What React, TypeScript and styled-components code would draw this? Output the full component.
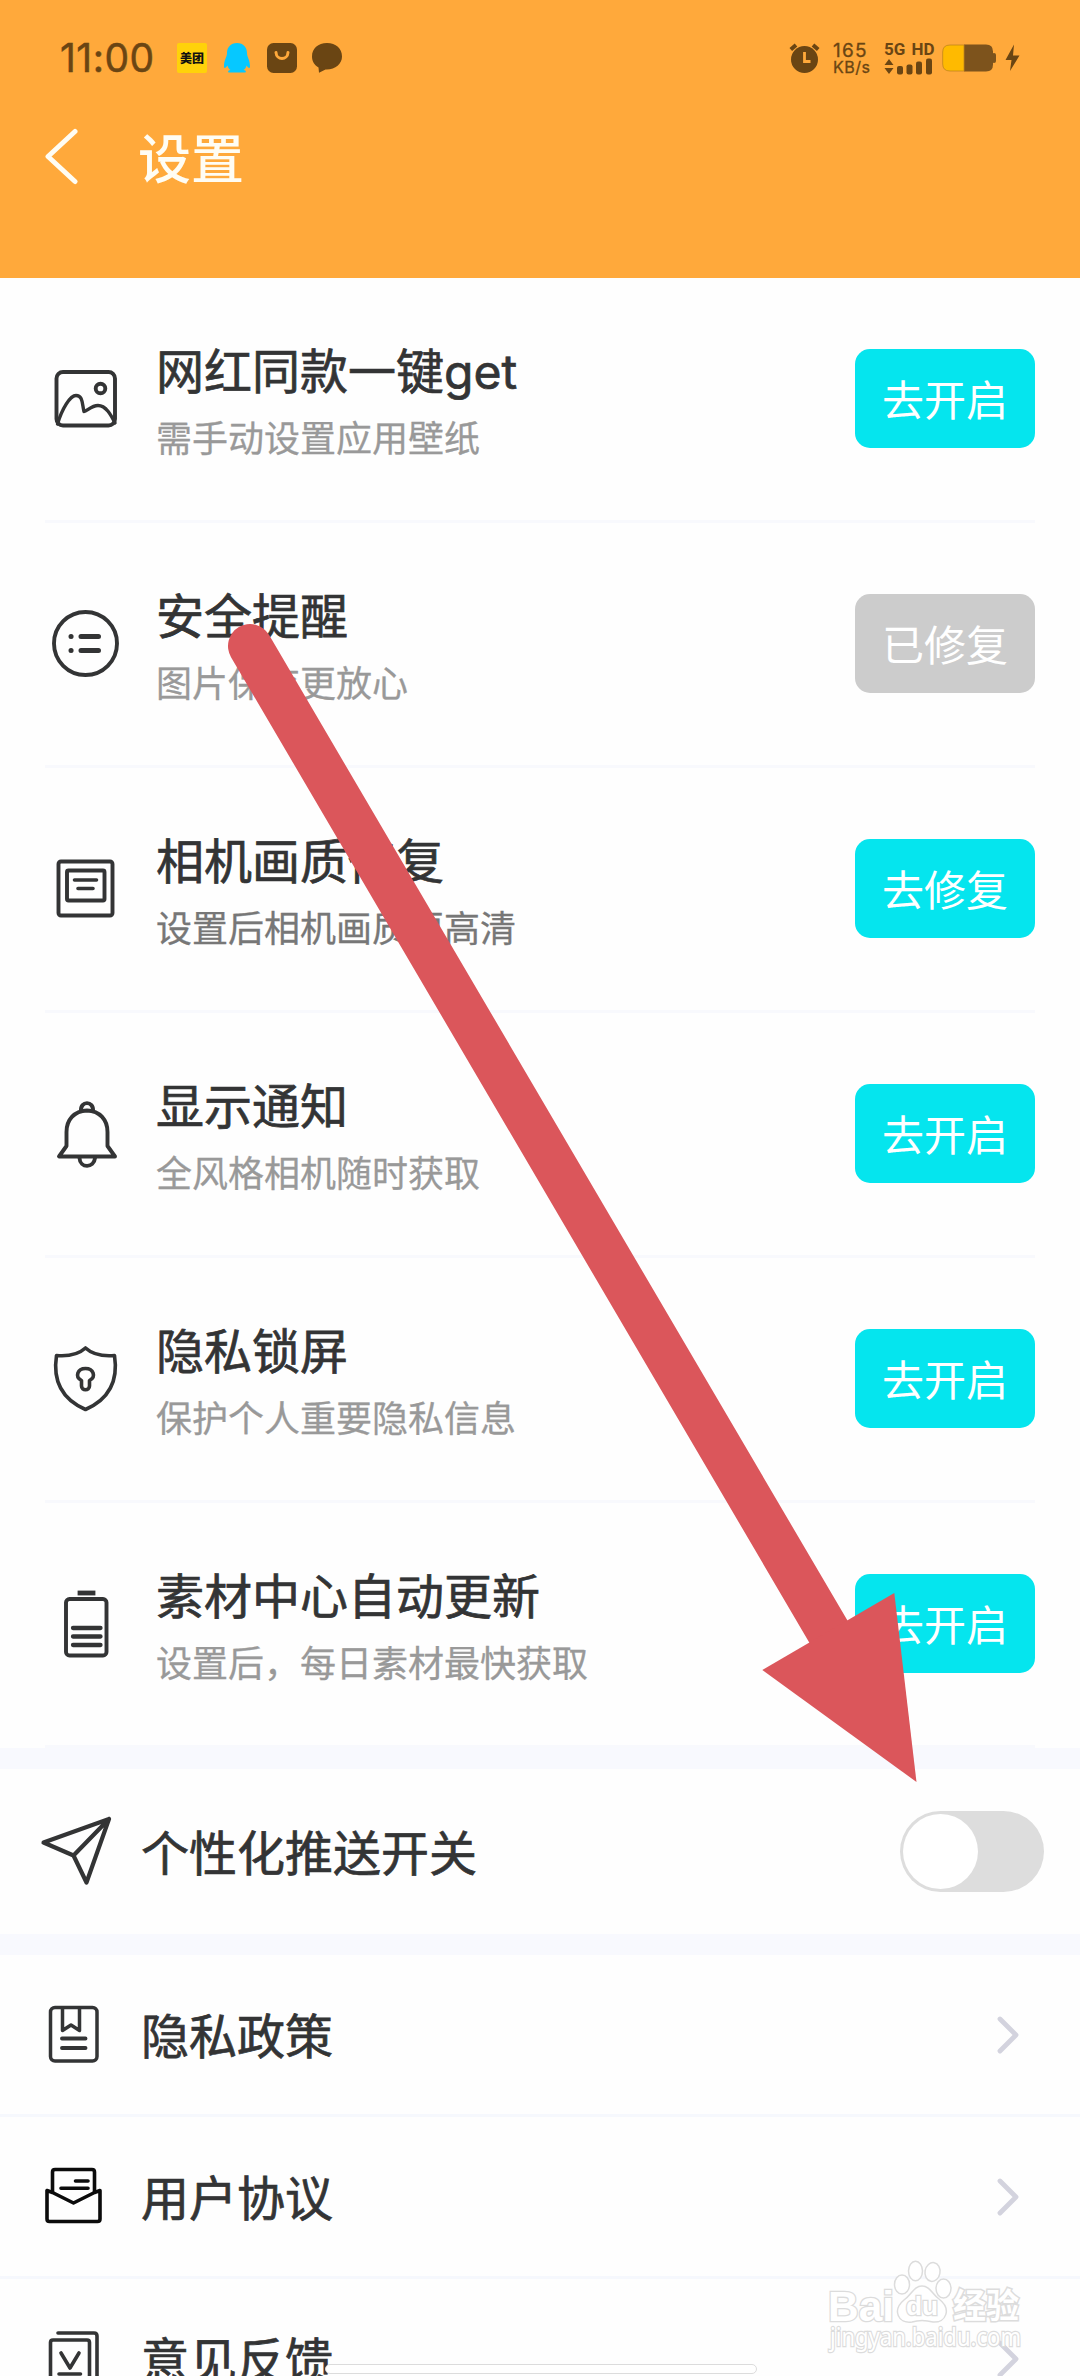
import React from "react";
import styled, { createGlobalStyle } from "styled-components";

const INK = "#333435";
const BROWN = "#6a4513";
const CJK = `"Noto Sans CJK SC", sans-serif`;

const GlobalStyle = createGlobalStyle`
  * { box-sizing: border-box; }
  html, body { margin: 0; padding: 0; background: #fff; }
  body { font-family: "Inter", ${CJK}; }
`;

const Screen = styled.div`
  position: relative;
  width: 1080px;
  height: 2376px;
  overflow: hidden;
  background: #fefefe;
  display: flex;
  flex-direction: column;
`;

const Header = styled.header`
  flex: none;
  height: 278px;
  background: #ffa93b;
  display: flex;
  flex-direction: column;
`;

const StatusBar = styled.div`
  height: 116px;
  padding: 0 60px 0 60px;
  display: flex;
  align-items: center;
  color: ${BROWN};
`;

const Clock = styled.span`
  font-size: 39px;
  line-height: 44px;
  width: 117px;
  letter-spacing: 0.5px;
  -webkit-text-stroke: 0.5px ${BROWN};
  white-space: nowrap;
`;

const AppBadges = styled.div`
  display: flex;
  align-items: center;
  gap: 15px;
  flex: 1;
`;

const MeituanBadge = styled.span`
  width: 30px;
  height: 30px;
  border-radius: 2px;
  background: #ffd20a;
  color: #111;
  font: 900 12px/30px ${CJK};
  text-align: center;
  white-space: nowrap;
`;

const Indicators = styled.div`
  display: flex;
  align-items: center;
`;

const NetSpeed = styled.div`
  display: flex;
  flex-direction: column;
  width: 51px;
  margin-left: 13px;
  padding-top: 1px;
`;

const SpeedLine = styled.span<{ $size: number; $track: number }>`
  font-size: ${(p) => p.$size}px;
  letter-spacing: ${(p) => p.$track}px;
  line-height: 17px;
  -webkit-text-stroke: 0.3px ${BROWN};
  white-space: nowrap;
`;

const Cellular = styled.div`
  display: flex;
  flex-direction: column;
  width: 58px;
`;

const CellLabel = styled.span`
  font: 700 17px/17px Roboto, sans-serif;
  white-space: nowrap;
  word-spacing: 2px;
`;

const TitleBar = styled.div`
  display: flex;
  align-items: center;
  height: 80px;
  padding-left: 43px;
  gap: 59px;
`;

const PageTitle = styled.h1`
  margin: 0;
  font: 500 53px/78px ${CJK};
  color: #fffdf4;
`;

const FeatureRow = styled.section`
  flex: none;
  height: 245px;
  margin: 0 45px;
  border-bottom: 3px solid #f8f9fd;
  display: flex;
  align-items: center;
`;

const RowIcon = styled.svg`
  flex: none;
  display: block;
  width: 80px;
  fill: none;
  stroke: ${INK};
  stroke-width: 3.9;
  stroke-linecap: round;
  stroke-linejoin: round;
`;

const FeatureText = styled.div`
  flex: 1;
  margin-left: 31px;
  padding-top: 8px;
  display: flex;
  flex-direction: column;
`;

const FeatureTitle = styled.span`
  font-size: 48px;
  line-height: 66px;
  color: ${INK};
  -webkit-text-stroke: 0.7px ${INK};
  white-space: nowrap;
`;

const FeatureNote = styled.span<{ $dark?: boolean }>`
  font: 400 36px/62px ${CJK};
  color: ${(p) => (p.$dark ? "#777" : "#999")};
  -webkit-text-stroke: 0.3px currentColor;
  white-space: nowrap;
`;

const ActionButton = styled.button<{ $done?: boolean }>`
  width: 180px;
  height: 99px;
  margin-bottom: 1px;
  border: 0;
  border-radius: 15px;
  padding: 0 0 2px;
  background: ${(p) => (p.$done ? "#ccc" : "#05e5ee")};
  color: #fff;
  font: 400 42px/60px ${CJK};
  white-space: nowrap;
`;

const Band = styled.div`
  flex: none;
  height: 21px;
  background: #f8f9fe;
`;

const ListRow = styled.div<{ $height: number; $line?: boolean; $right: number }>`
  flex: none;
  height: ${(p) => p.$height}px;
  padding: 0 ${(p) => p.$right}px 0 34px;
  border-bottom: ${(p) => (p.$line ? "3px solid #f6f8fd" : "0")};
  display: flex;
  align-items: center;
`;

const ListLabel = styled.span`
  flex: 1;
  margin-left: 27px;
  padding-bottom: 4px;
  font: 400 48px/66px ${CJK};
  color: ${INK};
  -webkit-text-stroke: 0.7px ${INK};
`;

const Switch = styled.span`
  width: 144px;
  height: 81px;
  padding: 3px;
  border-radius: 41px;
  background: #ddd;
`;

const Knob = styled.span`
  display: block;
  width: 75px;
  height: 75px;
  border-radius: 50%;
  background: #fff;
`;

const Pointer = styled.svg`
  position: absolute;
  left: 0;
  top: 0;
  pointer-events: none;
`;

const HomeIndicator = styled.div`
  position: absolute;
  left: 325px;
  top: 2364px;
  width: 432px;
  height: 10px;
  border: 1.5px solid #dcdcdc;
  border-radius: 5px;
  background: #fff;
`;

const Watermark = styled.svg`
  position: absolute;
  left: 820px;
  top: 2255px;
  overflow: visible;
`;

const Chevron = () => (
  <svg width="24" height="42" viewBox="0 0 24 42" fill="none" stroke="#d3d3de" strokeWidth="4.8" strokeLinecap="round">
    <path d="M4 5 L20 21 L4 37" strokeLinejoin="round" />
  </svg>
);

type IconName = "image" | "list" | "frame" | "bell" | "shield" | "battery" | "plane" | "book" | "mail" | "feedback";

const iconShapes: Record<IconName, React.ReactNode> = {
  image: (
    <>
      <rect x="11.500" y="13" width="58.500" height="53.500" rx="6.500" />
      <circle cx="55.500" cy="29.500" r="4.800" />
      <path d="M12.500 65 C17 50 25 36.500 31 36.500 C38 36.500 37 45 39 52.500 C42 52.500 46 46.500 53 46.500 C61 46.500 66 56 70 64" strokeWidth="3.400" />
    </>
  ),
  list: (
    <>
      <circle cx="40.500" cy="39.500" r="31.500" />
      <path d="M36 32.500 H53.500 M36 46.500 H53.500" strokeWidth="5" />
      <path d="M26 32.500 h0.100 M26 46.500 h0.100" strokeWidth="5" />
    </>
  ),
  frame: (
    <>
      <rect x="13.500" y="12.500" width="54" height="54" rx="2.500" />
      <rect x="22" y="21.500" width="37.500" height="30" rx="1.500" />
      <path d="M29.500 31 H51.500 M33 39.500 H48" strokeWidth="3.600" />
    </>
  ),
  bell: (
    <>
      <path d="M36 17 C35 6.500 49 6.500 48 17" />
      <path d="M42 16.500 C29 17 21.500 26 21.500 38 V52 L14 62.500 H70 L62.500 52 V38 C62.500 26 55 17 42 16.500 Z" />
      <path d="M34.500 64 C35 74.500 49 74.500 50 64" />
    </>
  ),
  shield: (
    <>
      <path d="M40.500 9 C34 15 24 17.500 11.500 16.500 C8.500 36 12 58 40.500 70.500 C69 58 72.500 36 69.500 16.500 C57 17.500 47 15 40.500 9 Z" strokeWidth="3.600" />
      <path d="M36.500 41.500 C29.500 38 32.500 29.500 40.500 29.500 C48.500 29.500 51.500 38 44.500 41.500 V47 C44.500 52 36.500 52 36.500 47 Z" strokeWidth="3.600" />
    </>
  ),
  battery: (
    <>
      <path d="M35 9 H48" strokeWidth="4.800" strokeLinecap="square" />
      <rect x="21" y="15" width="40.500" height="56.500" rx="3.500" />
      <path d="M28 44 H55.500 M28 52.500 H55.500 M28 61 H55.500" strokeWidth="4.300" />
    </>
  ),
  plane: (
    <path d="M9.500 31.500 L75 8 L52.500 71.500 L39.500 44.500 Z M39.500 44.500 L75 8" strokeWidth="4.200" />
  ),
  book: (
    <>
      <rect x="16.500" y="13.500" width="46.500" height="53.500" rx="4.500" strokeWidth="3.500" />
      <path d="M28.500 14 V36.500 L37 31 L45.500 36.500 V14" strokeWidth="3.500" />
      <path d="M28 44.500 H51.500 M28 54 H51.500" />
    </>
  ),
  mail: (
    <g stroke="#0b0b0b" strokeWidth="3.600">
      <path d="M18.500 36 V16 Q18.500 13.500 21 13.500 H58 Q60.500 13.500 60.500 16 V36" />
      <path d="M18.500 36.500 L13 34.500 V63 Q13 65.500 15.500 65.500 H63.500 Q66 65.500 66 63 V34.500 L60.500 36.500 L39.500 47 Z" />
      <path d="M41.500 25 H54 M27 32.300 H54" />
    </g>
  ),
  feedback: (
    <g strokeWidth="3.600">
      <path d="M24 15 H60 Q63 15 63 18 V81" />
      <path d="M16.500 81 V24.500 Q16.500 22 19 22 H53 Q55.500 22 55.500 24.500 V81" />
      <path d="M27 35 L36 50 L45 35 M25 56 H46.500" />
    </g>
  ),
};

const Icon = ({ name, height = 80 }: { name: IconName; height?: number }) => (
  <RowIcon height={height} viewBox={`0 0 80 ${height}`}>
    {iconShapes[name]}
  </RowIcon>
);

const features: { icon: IconName; title: string; note: string; action: string; done?: boolean; dark?: boolean }[] = [
  { icon: "image", title: "网红同款一键get", note: "需手动设置应用壁纸", action: "去开启" },
  { icon: "list", title: "安全提醒", note: "图片保存更放心", action: "已修复", done: true },
  { icon: "frame", title: "相机画质修复", note: "设置后相机画质更高清", action: "去修复", dark: true },
  { icon: "bell", title: "显示通知", note: "全风格相机随时获取", action: "去开启" },
  { icon: "shield", title: "隐私锁屏", note: "保护个人重要隐私信息", action: "去开启" },
  { icon: "battery", title: "素材中心自动更新", note: "设置后，每日素材最快获取", action: "去开启" },
];

const links: { icon: IconName; label: string }[] = [
  { icon: "book", label: "隐私政策" },
  { icon: "mail", label: "用户协议" },
  { icon: "feedback", label: "意见反馈" },
];

export default function App() {
  return (
    <Screen>
      <GlobalStyle />
      <Header>
        <StatusBar>
          <Clock>11:00</Clock>
          <AppBadges>
            <MeituanBadge>美团</MeituanBadge>
            <svg width="30" height="30" viewBox="0 0 30 30" fill="#06c8ff">
              <path d="M15 0 C8.500 0 5 4.500 5 10 C5 14 2 17 2 23 C2 26 3.500 25.500 5.500 22.500 C6 24.500 7 26 8.500 27 C5.500 27.500 5.500 29.500 7.500 29.500 H22.500 C24.500 29.500 24.500 27.500 21.500 27 C23 26 24 24.500 24.500 22.500 C26.500 25.500 28 26 28 23 C28 17 25 14 25 10 C25 4.500 21.500 0 15 0 Z" />
            </svg>
            <svg width="30" height="30" viewBox="0 0 30 30">
              <rect width="30" height="30" rx="6.500" fill={BROWN} />
              <path d="M9 9.500 C9.500 17.500 20.500 17.500 21 9.500" fill="none" stroke="#ffa93b" strokeWidth="3" strokeLinecap="round" />
            </svg>
            <svg width="30" height="30" viewBox="0 0 30 30" fill={BROWN}>
              <path d="M15 0 C6 0 0 5.500 0 13.500 C0 18.500 2.500 22 6.500 24.500 L7 29.800 L13.500 26.500 C23 27 30 21 30 13.500 C30 5.500 24 0 15 0 Z" />
            </svg>
          </AppBadges>
          <Indicators>
            <svg width="31" height="30" viewBox="0 0 31 30">
              <circle cx="15.500" cy="16.500" r="13.500" fill={BROWN} />
              <path d="M1.800 6.500 L7 2 M29.200 6.500 L24 2" stroke={BROWN} strokeWidth="4" />
              <path d="M15.500 9 V18.500 H21.500" fill="none" stroke="#ffa93b" strokeWidth="2.800" />
            </svg>
            <NetSpeed>
              <SpeedLine $size={19} $track={1.2}>165</SpeedLine>
              <SpeedLine $size={16} $track={0.5}>KB/s</SpeedLine>
            </NetSpeed>
            <Cellular>
              <CellLabel>5G HD</CellLabel>
              <svg width="48" height="17" viewBox="0 0 48 17" fill={BROWN}>
                <path d="M5 1 L9.500 7 H0.500 Z M5 16 L9.500 10 H0.500 Z" />
                <rect x="13" y="8" width="6" height="8.500" rx="2" />
                <rect x="22.500" y="6.500" width="6" height="10" rx="2" />
                <rect x="32" y="3.500" width="6" height="13" rx="2" />
                <rect x="42" y="0.500" width="6" height="16" rx="2" />
              </svg>
            </Cellular>
            <svg width="78" height="30" viewBox="0 0 78 30">
              <path d="M8 1.500 H44 Q51 1.500 51 8.500 V21.500 Q51 28.500 44 28.500 H22 V1.500 Z" fill="#7d531c" />
              <path d="M22 2 H8 Q0.700 2 0.700 9 V21 Q0.700 28 8 28 H22 Z" fill="#ffba00" stroke="#c0851c" strokeWidth="0.800" />
              <rect x="50" y="10" width="4" height="10" rx="2" fill="#7d531c" />
              <path d="M72 1.500 L63.500 17 H69.500 L68 28 L77.500 12.500 H71 Z" fill={BROWN} />
            </svg>
          </Indicators>
        </StatusBar>
        <TitleBar>
          <svg width="36" height="58" viewBox="0 0 36 58" fill="none" stroke="#fffdf4" strokeWidth="5">
            <path d="M32 4.500 L5 29.500 L32 54.500" strokeLinecap="round" strokeLinejoin="round" />
          </svg>
          <PageTitle>设置</PageTitle>
        </TitleBar>
      </Header>

      {features.map((f) => (
        <FeatureRow key={f.title}>
          <Icon name={f.icon} />
          <FeatureText>
            <FeatureTitle>{f.title}</FeatureTitle>
            <FeatureNote $dark={f.dark}>{f.note}</FeatureNote>
          </FeatureText>
          <ActionButton $done={f.done}>{f.action}</ActionButton>
        </FeatureRow>
      ))}

      <Band />
      <ListRow $height={165} $right={36}>
        <Icon name="plane" height={81} />
        <ListLabel>个性化推送开关</ListLabel>
        <Switch>
          <Knob />
        </Switch>
      </ListRow>
      <Band />

      {links.map((l) => (
        <ListRow key={l.label} $height={162} $right={60} $line>
          <Icon name={l.icon} height={81} />
          <ListLabel>{l.label}</ListLabel>
          <Chevron />
        </ListRow>
      ))}

      <Pointer width="1080" height="2376" viewBox="0 0 1080 2376">
        <path d="M250 646 L831 1636" stroke="#db565b" strokeWidth="44" strokeLinecap="round" />
        <path d="M894.300 1593 L916.500 1782 L762.300 1670 Z" fill="#db565b" />
      </Pointer>

      <HomeIndicator />

      <Watermark width="210" height="105" viewBox="0 0 210 105" fill="#fff" stroke="#dcdcdc" strokeWidth="1.500">
        <g fontFamily={`"Liberation Sans", ${CJK}`} fontWeight="700">
          <text x="8" y="66" fontSize="43" textLength="66" lengthAdjust="spacingAndGlyphs" paintOrder="stroke" strokeWidth="2.600">Bai</text>
          <ellipse cx="82" cy="29.500" rx="7.500" ry="9.500" />
          <ellipse cx="95.500" cy="16" rx="7" ry="9.800" />
          <ellipse cx="112.500" cy="17" rx="7.500" ry="9.500" transform="rotate(10 112.500 17)" />
          <ellipse cx="123.500" cy="33.500" rx="7.500" ry="9.500" />
          <path d="M102 31 C110 31 112 39 119 44 C132 54 126 68 113 67 C106 65 98 65 92 67 C78 69 72 55 84 45 C92 39 94 31 102 31 Z" />
          <text x="86" y="60" fontSize="26" textLength="32" lengthAdjust="spacingAndGlyphs" paintOrder="stroke" strokeWidth="2.500">du</text>
          <text x="133" y="63" fontSize="34" fontFamily={CJK} textLength="66" lengthAdjust="spacingAndGlyphs" paintOrder="stroke" strokeWidth="3">经验</text>
        </g>
        <text x="10" y="91" fontSize="25" fontFamily={`"Noto Sans", sans-serif`} textLength="191" lengthAdjust="spacingAndGlyphs" paintOrder="stroke" strokeWidth="2.500">jingyan.baidu.com</text>
      </Watermark>
    </Screen>
  );
}
